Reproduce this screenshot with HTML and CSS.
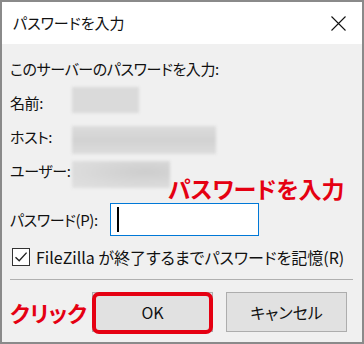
FILE: index.html
```html
<!DOCTYPE html>
<html lang="ja">
<head>
<meta charset="utf-8">
<title>パスワードを入力</title>
<link rel="stylesheet" href="styles.css">
</head>
<body>
<div class="window">
  <div class="titlebar">
    <span class="title">パスワードを入力</span>
    <svg class="close" width="15" height="15" viewBox="0 0 15 15"><path d="M0.5 0.5 L14.5 14.5 M14.5 0.5 L0.5 14.5" stroke="#111" stroke-width="1.1" fill="none"/></svg>
  </div>
  <div class="content">
    <div class="row">このサーバーのパスワードを入力:</div>
    <div class="row"><span class="label">名前:</span><span class="blur blur-name"></span></div>
    <div class="row"><span class="label">ホスト:</span><span class="blur blur-host"></span></div>
    <div class="row"><span class="label">ユーザー:</span><span class="blur blur-user"></span></div>
    <div class="row pw-row"><span class="pw-label">パスワード(P):</span><span class="input"><span class="caret"></span></span></div>
    <div class="row cb-row">
      <span class="checkbox"><svg width="18" height="18" viewBox="0 0 18 18"><path d="M3.5 9.2 L7.2 12.8 L14.6 4.6" stroke="#222" stroke-width="1.4" fill="none"/></svg></span>
      <span class="cb-text">FileZilla が終了するまでパスワードを記憶(R)</span>
    </div>
    <div class="separator"></div>
    <div class="buttons">
      <span class="note-click">クリック</span>
      <span class="btn btn-ok">OK</span>
      <span class="btn btn-cancel">キャンセル</span>
    </div>
  </div>
  <span class="note-pw">パスワードを入力</span>
</div>
</body>
</html>
```
FILE: styles.css
```css
html, body {
  margin: 0;
  padding: 0;
  background: #f0f0f0;
}
body {
  font-family: "Noto Sans CJK JP", "Noto Sans", sans-serif;
  font-feature-settings: "palt";
  color: #111;
}
.window {
  position: relative;
  width: 364px;
  height: 344px;
  box-sizing: border-box;
  border: 2px solid #8a8a8a;
  background: #f0f0f0;
  display: flex;
  flex-direction: column;
}
.titlebar {
  height: 42px;
  background: #fff;
  display: flex;
  align-items: center;
  justify-content: space-between;
  padding: 0 16px 0 11px;
}
.title {
  font-size: 15px;
  line-height: 20px;
  color: #111;
}
.close {
  display: block;
  margin-top: 1px;
}
.content {
  padding: 8px 0 0 8px;
  display: flex;
  flex-direction: column;
  font-size: 15px;
  letter-spacing: -0.4px;
}
.row {
  height: 34px;
  display: flex;
  align-items: center;
  line-height: 20px;
  white-space: nowrap;
}
.label {
  width: 62px;
  flex: none;
}
.blur {
  align-self: flex-start;
  display: block;
  background: #dadada;
  filter: blur(1.5px);
}
.blur-name {
  width: 67px;
  height: 26px;
  margin-top: 1px;
}
.blur-host {
  width: 144px;
  height: 28px;
  margin-top: 6px;
  background: linear-gradient(180deg, #dcdcdc 0%, #d2d2d2 50%, #dcdcdc 100%);
}
.blur-user {
  width: 98px;
  height: 27px;
  margin-top: 7px;
  background: radial-gradient(ellipse at 75% 40%, #cdcdcd 0%, #dadada 60%, #e0e0e0 100%);
}
.pw-row {
  margin-top: 15px;
  height: 33px;
}
.pw-label {
  width: 100px;
  flex: none;
}
.input {
  width: 149px;
  height: 33px;
  box-sizing: border-box;
  border: 1px solid #0078d7;
  background: #fff;
  display: flex;
  align-items: center;
  padding-left: 6px;
}
.caret {
  width: 1.5px;
  height: 25px;
  background: #000;
}
.cb-row {
  margin-top: 4px;
}
.checkbox {
  width: 18px;
  height: 18px;
  box-sizing: border-box;
  border: 1px solid #333;
  background: #fff;
  margin-left: 2px;
  flex: none;
  display: flex;
}
.checkbox svg {
  display: block;
  margin: -1px;
}
.cb-text {
  margin-left: 6px;
  font-size: 16px;
  letter-spacing: 0;
}
.separator {
  margin: 5px 9px 0 0;
  height: 1px;
  background: #b0b0b0;
}
.buttons {
  margin-top: 12px;
  height: 40px;
  display: flex;
  align-items: center;
  padding-right: 15px;
}
.note-click {
  color: #e50012;
  font-weight: bold;
  font-size: 22px;
  line-height: 30px;
  letter-spacing: 0;
  white-space: nowrap;
  flex: none;
  margin-right: auto;
}
.btn {
  width: 121px;
  height: 40px;
  box-sizing: border-box;
  background: #e1e1e1;
  border: 1px solid #adadad;
  display: flex;
  align-items: center;
  justify-content: center;
  font-size: 16px;
  letter-spacing: 0;
  color: #111;
  flex: none;
}
.btn-ok {
  position: relative;
}
.btn-ok::after {
  content: "";
  position: absolute;
  inset: -1px -1px -3px -1px;
  border: 4px solid #e50012;
  border-radius: 7px;
}
.btn-cancel {
  margin-left: 13px;
}
.note-pw {
  position: absolute;
  left: 166px;
  top: 172px;
  color: #e50012;
  font-weight: bold;
  font-size: 23px;
  line-height: 28px;
  white-space: nowrap;
}
```
